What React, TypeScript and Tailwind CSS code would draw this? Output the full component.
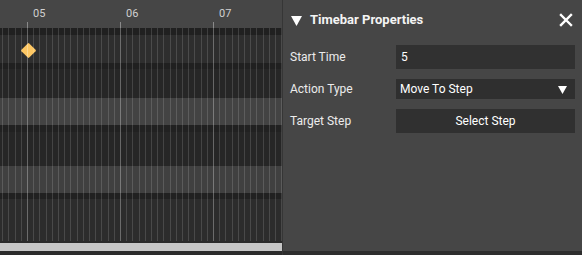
import React from 'react';

const rows = [
  { h: 'h-[7px]', bg: 'bg-[#202020]' },
  { h: 'h-[28px]', bg: 'bg-[#2e2e2e]', key: true },
  { h: 'h-[6px]', bg: 'bg-[#202020]' },
  { h: 'h-[29px]', bg: 'bg-[#262626]' },
  { h: 'h-[27px]', bg: 'bg-[#434343]' },
  { h: 'h-[7px]', bg: 'bg-[#212121]' },
  { h: 'h-[34px]', bg: 'bg-[#262626]' },
  { h: 'h-[27px]', bg: 'bg-[#404040]' },
  { h: 'h-[6px]', bg: 'bg-[#212121]' },
  { h: 'h-[42px]', bg: 'bg-[#2c2c2c]' }
];

const labels = [
  { text: '05', x: 27 },
  { text: '06', x: 120 },
  { text: '07', x: 213 }
];

const Grid: React.FC = () => {
  const lines = [];
  for (let i = -4; i < 42; i++) {
    const x = 27 + i * 6.2;
    if (x < 0 || x > 282) continue;
    const major = i % 15 === 0;
    lines.push(
      <line
        key={i}
        x1={Math.round(x) + 0.5}
        x2={Math.round(x) + 0.5}
        y1={0}
        y2={213}
        stroke={major ? 'rgba(255,255,255,0.3)' : 'rgba(255,255,255,0.14)'}
        strokeWidth={1}
      />
    );
  }
  return (
    <svg className="absolute inset-0 pointer-events-none" width={282} height={213}>
      {lines}
    </svg>
  );
};

const Timeline: React.FC = () => (
  <div className="flex flex-col w-[282px] shrink-0 bg-[#2a2a2a]">
    <div className="relative h-[28px] bg-[#464646]">
      {labels.map((l) => (
        <React.Fragment key={l.text}>
          <span
            className="absolute top-[7px] text-[11px] leading-[14px] text-[#d0d0d0]"
            style={{ left: l.x + 6 }}
          >
            {l.text}
          </span>
          <span className="absolute top-[22px] h-[6px] w-px bg-[#8a8a8a]" style={{ left: l.x }} />
        </React.Fragment>
      ))}
    </div>
    <div className="relative flex flex-col h-[213px]">
      {rows.map((r, i) => (
        <div key={i} className={`${r.h} ${r.bg} relative`}>
          {r.key && (
            <div className="absolute left-[23px] top-[10px] h-[11px] w-[11px] rotate-45 rounded-[1px] bg-[#fdc763]" />
          )}
        </div>
      ))}
      <Grid />
    </div>
    <div className="h-[2px] bg-[#2a2a2a]" />
    <div className="h-[8px] bg-[#c6c6c6]" />
    <div className="h-[4px] bg-[#2b2b2b]" />
  </div>
);

const Caret: React.FC<{ className?: string }> = ({ className }) => (
  <svg viewBox="0 0 10 10" className={className}>
    <path d="M0 1 L10 1 L5 10 Z" fill="currentColor" />
  </svg>
);

const Field: React.FC<{ label: string; children: React.ReactNode; className?: string }> = ({
  label,
  children,
  className
}) => (
  <div className={`flex items-center ${className || ''}`}>
    <span className="w-[113px] pl-[7px] text-[#ececec]">{label}</span>
    {children}
  </div>
);

const Properties: React.FC = () => (
  <div className="flex flex-col flex-1 border-l border-[#363636] bg-[#464646]">
    <div className="flex-1 pr-[7px] text-[12px]">
      <div className="flex items-center h-[40px] pl-[8px]">
        <Caret className="w-[11px] h-[11px] text-white" />
        <span className="ml-[8px] text-[13px] font-bold text-[#f4f4f4]">Timebar Properties</span>
        <svg viewBox="0 0 14 14" className="ml-auto mr-[2px] w-[14px] h-[14px]">
          <path d="M2 2 L12 12 M12 2 L2 12" stroke="#ffffff" strokeWidth={2.4} strokeLinecap="square" />
        </svg>
      </div>
      <Field label="Start Time" className="mt-[5px]">
        <div className="flex-1 h-[24px] bg-[#313131] pl-[5px] flex items-center text-white">5</div>
      </Field>
      <Field label="Action Type" className="mt-[10px]">
        <div className="flex-1 h-[20px] bg-[#2f2f2f] pl-[4px] pr-[8px] flex items-center text-white">
          <span>Move To Step</span>
          <Caret className="ml-auto w-[9px] h-[9px] text-white" />
        </div>
      </Field>
      <Field label="Target Step" className="mt-[10px]">
        <div className="flex-1 h-[24px] bg-[#303030] flex items-center justify-center text-white">
          Select Step
        </div>
      </Field>
    </div>
    <div className="h-[4px] bg-[#2d2d2d]" />
  </div>
);

export default function App() {
  return (
    <div className="flex w-[582px] h-[255px] overflow-hidden font-['Roboto',sans-serif]">
      <Timeline />
      <Properties />
    </div>
  );
}
